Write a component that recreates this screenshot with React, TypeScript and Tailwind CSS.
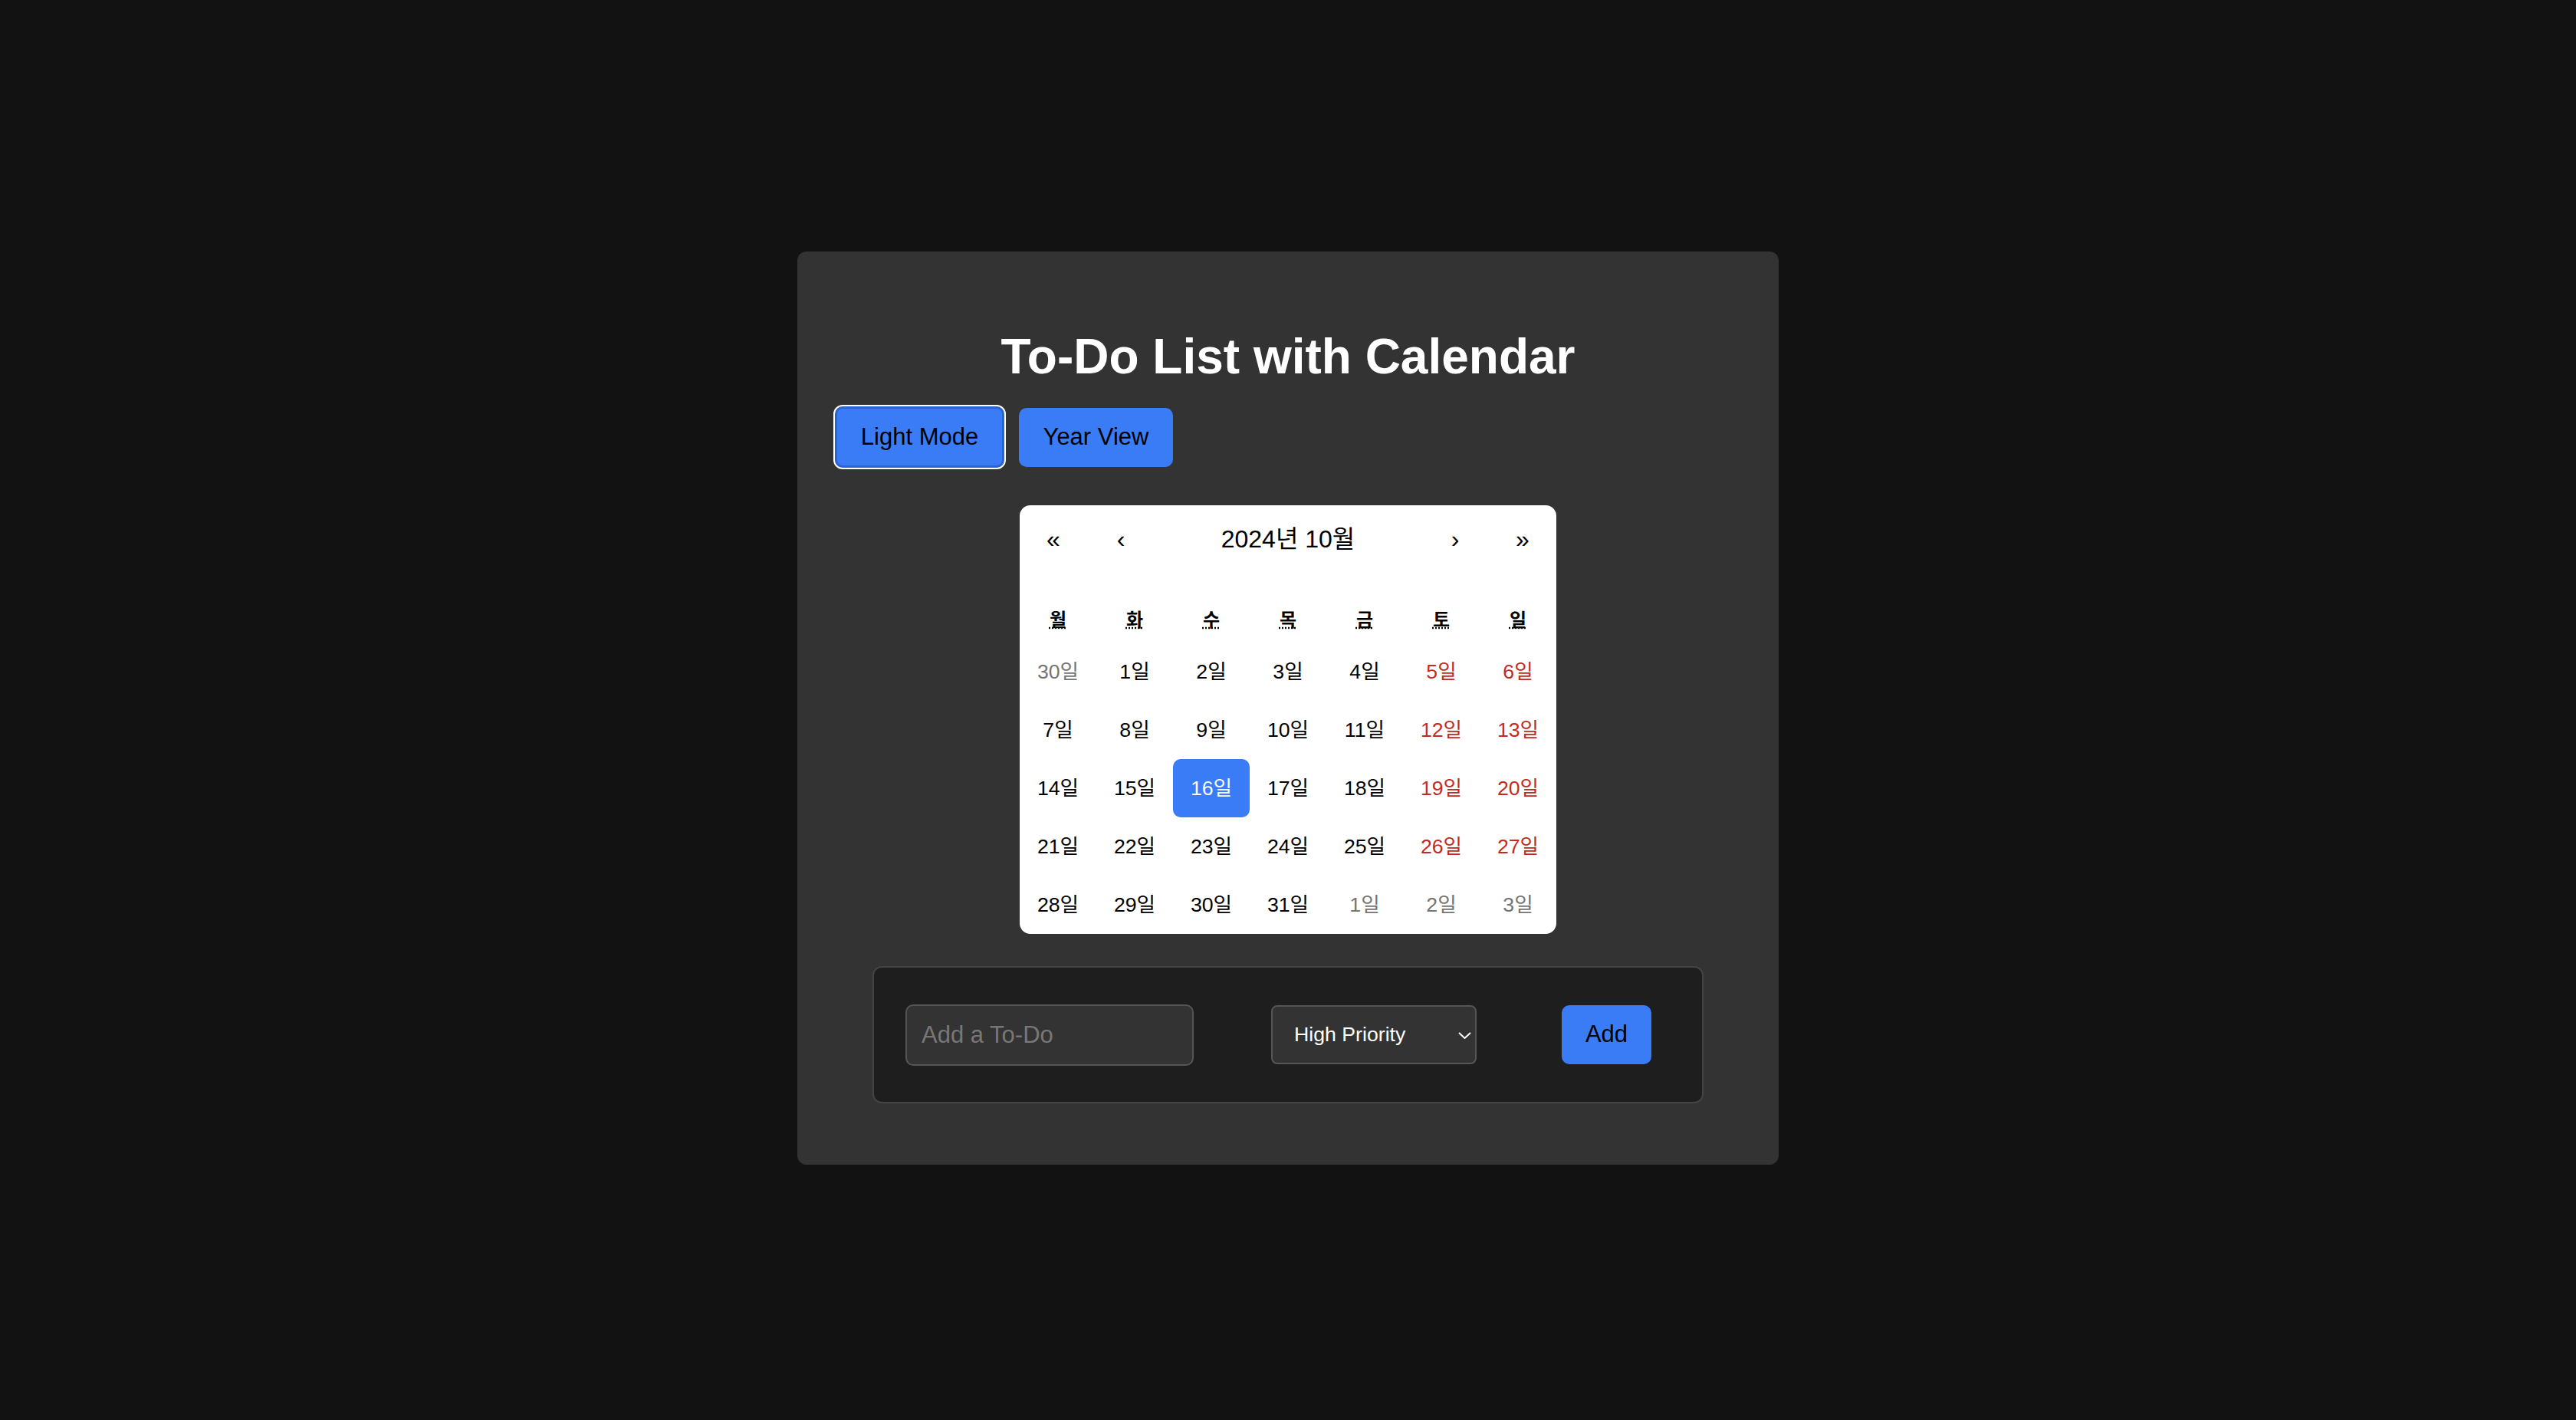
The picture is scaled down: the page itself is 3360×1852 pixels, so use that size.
import { useState } from "react";

interface Day {
  label: string;
  muted?: boolean;
  weekend?: boolean;
  active?: boolean;
}

const weekdays = ["월", "화", "수", "목", "금", "토", "일"];

// October 2024, week starts on Monday
const buildDays = (): Day[] => {
  const list: Day[] = [{ label: "30일", muted: true }];
  for (let d = 1; d <= 31; d++) {
    const col = list.length % 7;
    list.push({ label: `${d}일`, weekend: col >= 5, active: d === 16 });
  }
  for (let d = 1; list.length < 35; d++) {
    list.push({ label: `${d}일`, muted: true });
  }
  return list;
};

const App = () => {
  const [todo, setTodo] = useState("");
  const [priority, setPriority] = useState("high");
  const days = buildDays();

  return (
    <div className="min-h-screen bg-[#121212] pt-[328px] font-['Liberation_Sans','Noto_Sans_CJK_KR',sans-serif]">
      <div className="mx-auto w-[1280px] rounded-[12px] bg-[#333333] pt-[101px] pb-[80px]">
        <h1 className="text-center text-[64px] font-bold leading-[72px] text-white">
          To-Do List with Calendar
        </h1>

        {/* mode buttons */}
        <div className="mt-[29px] flex items-center pl-[49px]">
          <button className="h-[80px] w-[221px] rounded-[10px] border-[3px] border-[#2b63d3] bg-[#3a7cf5] text-[31px] text-black outline-2 outline-white">
            Light Mode
          </button>
          <button className="ml-[19px] h-[77px] w-[201px] rounded-[10px] bg-[#3a7cf5] text-[31px] text-black">
            Year View
          </button>
        </div>

        {/* calendar */}
        <div className="mx-auto mt-[49px] w-[700px] rounded-[14px] bg-white text-black">
          <div className="flex h-[88px] items-center text-[32px]">
            <button className="h-full w-[88px]">«</button>
            <button className="h-full w-[88px]">‹</button>
            <div className="flex-1 text-center">2024년 10월</div>
            <button className="h-full w-[88px]">›</button>
            <button className="h-full w-[88px]">»</button>
          </div>

          <div className="mt-[32px] grid h-[59px] grid-cols-7 items-center text-center text-[24px] font-bold">
            {weekdays.map((w) => (
              <div key={w}>
                <abbr className="underline decoration-dotted">{w}</abbr>
              </div>
            ))}
          </div>

          <div className="grid grid-cols-7">
            {days.map((day, i) => (
              <button
                key={i}
                className={
                  "h-[76px] text-[26.7px] " +
                  (day.active
                    ? "rounded-[10px] bg-[#3a7cf5] text-white"
                    : day.muted
                    ? "text-[#757575]"
                    : day.weekend
                    ? "text-[#c52a1f]"
                    : "text-black")
                }
              >
                {day.label}
              </button>
            ))}
          </div>
        </div>

        {/* add todo form */}
        <div className="mx-auto mt-[42px] flex h-[179px] w-[1084px] items-center rounded-[12px] border-2 border-[#444444] bg-[#1e1e1e] pl-[41px]">
          <input
            value={todo}
            onChange={(e) => setTodo(e.target.value)}
            placeholder="Add a To-Do"
            className="h-[80px] w-[376px] rounded-[10px] border-2 border-[#555555] bg-[#333333] px-[19px] text-[31px] text-white outline-none placeholder:text-[#777777]"
          />
          <div className="relative ml-[101px] h-[77px] w-[268px]">
            <select
              value={priority}
              onChange={(e) => setPriority(e.target.value)}
              className="h-full w-full appearance-none rounded-[8px] border-2 border-[#555555] bg-[#333333] pl-[28px] text-[26.7px] text-white outline-none"
            >
              <option value="high">High Priority</option>
              <option value="medium">Medium Priority</option>
              <option value="low">Low Priority</option>
            </select>
            <svg
              className="pointer-events-none absolute left-[244px] top-[35px]"
              width="17"
              height="9"
              viewBox="0 0 17 9"
              fill="none"
            >
              <path d="M1 1l7.5 7 7.5-7" stroke="white" strokeWidth="2" />
            </svg>
          </div>
          <button className="ml-[111px] h-[77px] w-[117px] rounded-[10px] bg-[#3a7cf5] text-[31px] text-black">
            Add
          </button>
        </div>
      </div>
    </div>
  );
};

export default App;
